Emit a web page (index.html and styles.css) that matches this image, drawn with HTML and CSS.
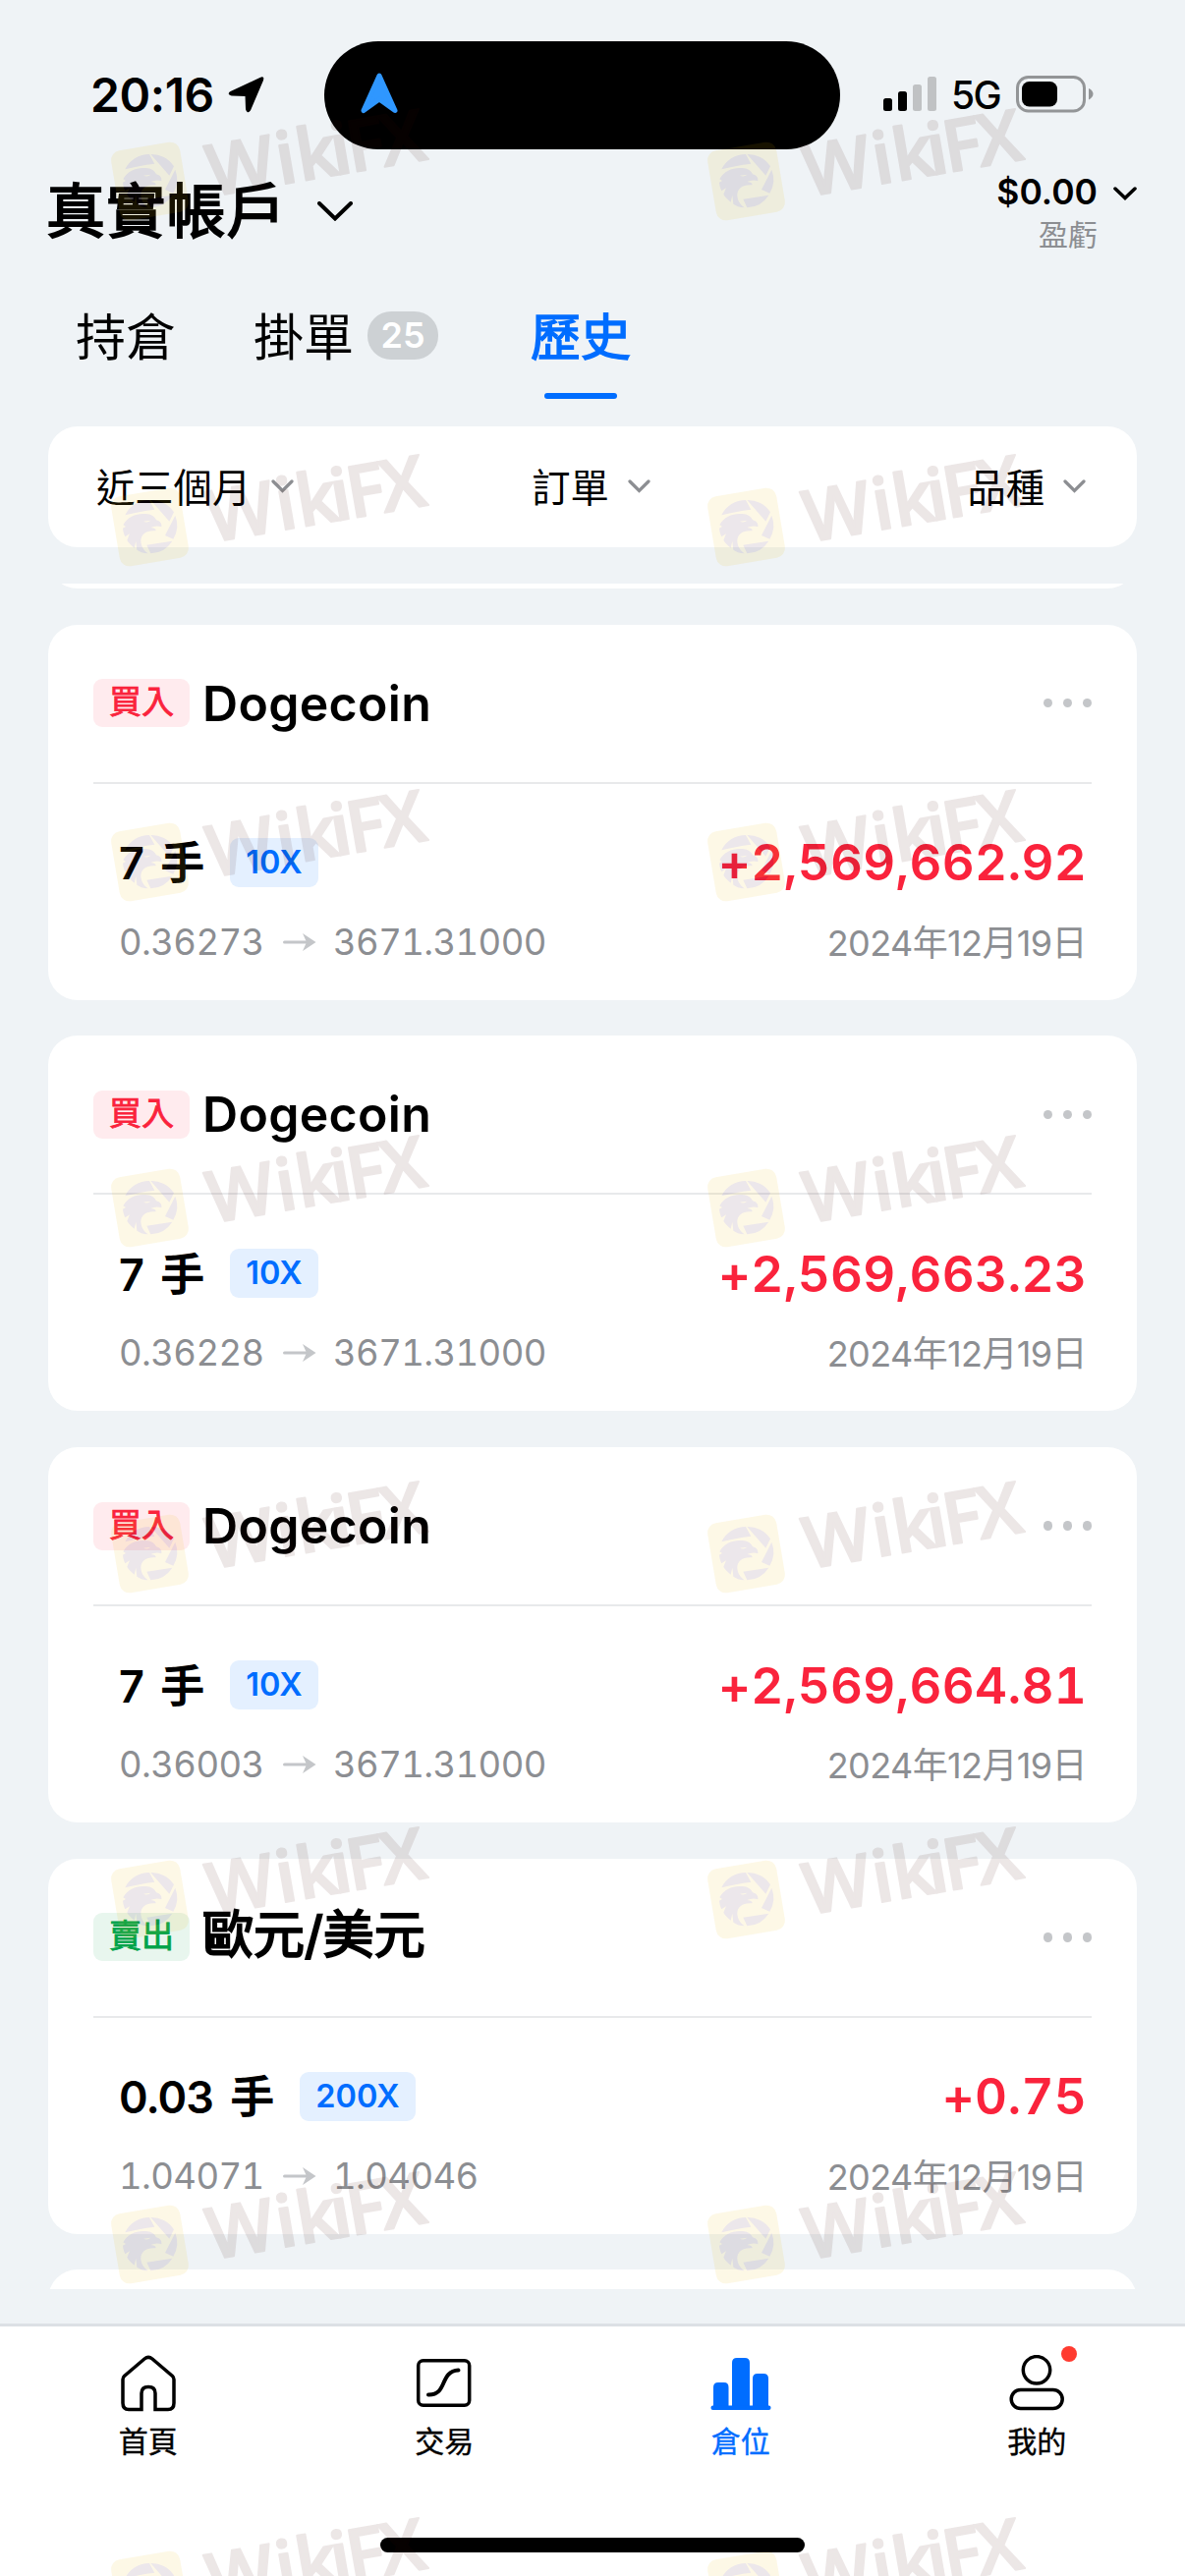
FILE: index.html
```html
<!doctype html>
<html lang="zh-Hant">
<head>
<meta charset="utf-8">
<title>歷史</title>
<link rel="stylesheet" href="styles.css">
</head>
<body>
<div class="phone">

<div class="status">
  <div class="status-left">
    <span class="time">20:16</span>
    <svg class="loc" width="38" height="38" viewBox="0 0 38 38"><path d="M3 17 L34 2.500 Q36 1.500 35 4.500 L22 35 Q20 38 19 34 L18.500 20 L4 19.500 Q0 18.500 3 17Z" fill="#000" stroke="#000" stroke-width="2" stroke-linejoin="round"/></svg>
  </div>
  <div class="island">
    <svg width="38" height="42" viewBox="0 0 38 42"><path d="M19 3 L35 38.500 L19 27 L3 38.500Z" fill="#2f97ff" stroke="#2f97ff" stroke-width="5" stroke-linejoin="round"/></svg>
  </div>
  <div class="status-right">
    <svg width="54" height="36" viewBox="0 0 54 36"><rect y="22" width="9" height="13" rx="2.500"/><rect x="15" y="15" width="9" height="20" rx="2.500"/><rect x="30" y="8" width="9" height="27" rx="2.500" fill="#c0c2c4"/><rect x="45" width="9" height="35" rx="2.500" fill="#c0c2c4"/></svg>
    <span class="net">5G</span>
    <svg width="80" height="38" viewBox="0 0 80 38"><rect x="1.500" y="1.500" width="68" height="34.500" rx="11" fill="none" stroke="#939597" stroke-width="3"/><rect x="6" y="6" width="36" height="25.500" rx="7.500"/><path d="M74 13 Q78.500 15 78.500 18.700 Q78.500 22 74 24.500Z" fill="#939597"/></svg>
  </div>
</div>

<div class="header">
  <h1>真實帳戶</h1>
  <svg class="chev-title" width="36" height="20" viewBox="0 0 36 20"><path d="M2 2 L18 17.500 L34 2" fill="none" stroke="#000" stroke-width="4" stroke-linecap="round"/></svg>
  <div class="pnl">
    <b>$0.00</b>
    <span>盈虧</span>
  </div>
  <svg class="chev-pnl" width="24" height="14" viewBox="0 0 24 14"><path d="M2 2 L12 11.500 L22 2" fill="none" stroke="#000" stroke-width="3.500" stroke-linecap="round"/></svg>
</div>

<div class="tabs">
  <div class="tab">持倉</div>
  <div class="tab">掛單<span class="count">25</span></div>
  <div class="tab active">歷史</div>
</div>

<div class="filters">
  <div class="filter">近三個月<svg width="23" height="14" viewBox="0 0 23 14"><path d="M2 2 L11.500 11.500 L21 2"/></svg></div>
  <div class="filter">訂單<svg width="23" height="14" viewBox="0 0 23 14"><path d="M2 2 L11.500 11.500 L21 2"/></svg></div>
  <div class="filter">品種<svg width="23" height="14" viewBox="0 0 23 14"><path d="M2 2 L11.500 11.500 L21 2"/></svg></div>
</div>

<div class="list">
  <div class="card prev"></div>

  <div class="card">
    <div class="card-head">
      <span class="tag buy">買入</span>
      <span class="symbol">Dogecoin</span>
      <span class="more"><i></i><i></i><i></i></span>
    </div>
    <div class="card-body">
      <div class="row">
        <span class="lots">7 手</span><span class="lever">10X</span>
        <span class="amount">+2,569,662.92</span>
      </div>
      <div class="row sub">
        <span class="open">0.36273</span>
        <svg width="34" height="20" viewBox="0 0 34 20"><path d="M1.500 10 H26"/><path class="tip" d="M20 1 L33.500 10 L20 19 L24 10Z"/></svg>
        <span class="close">3671.31000</span>
        <span class="date">2024年12月19日</span>
      </div>
    </div>
  </div>

  <div class="card">
    <div class="card-head">
      <span class="tag buy">買入</span>
      <span class="symbol">Dogecoin</span>
      <span class="more"><i></i><i></i><i></i></span>
    </div>
    <div class="card-body">
      <div class="row">
        <span class="lots">7 手</span><span class="lever">10X</span>
        <span class="amount">+2,569,663.23</span>
      </div>
      <div class="row sub">
        <span class="open">0.36228</span>
        <svg width="34" height="20" viewBox="0 0 34 20"><path d="M1.500 10 H26"/><path class="tip" d="M20 1 L33.500 10 L20 19 L24 10Z"/></svg>
        <span class="close">3671.31000</span>
        <span class="date">2024年12月19日</span>
      </div>
    </div>
  </div>

  <div class="card">
    <div class="card-head">
      <span class="tag buy">買入</span>
      <span class="symbol">Dogecoin</span>
      <span class="more"><i></i><i></i><i></i></span>
    </div>
    <div class="card-body">
      <div class="row">
        <span class="lots">7 手</span><span class="lever">10X</span>
        <span class="amount">+2,569,664.81</span>
      </div>
      <div class="row sub">
        <span class="open">0.36003</span>
        <svg width="34" height="20" viewBox="0 0 34 20"><path d="M1.500 10 H26"/><path class="tip" d="M20 1 L33.500 10 L20 19 L24 10Z"/></svg>
        <span class="close">3671.31000</span>
        <span class="date">2024年12月19日</span>
      </div>
    </div>
  </div>

  <div class="card">
    <div class="card-head">
      <span class="tag sell">賣出</span>
      <span class="symbol cjk">歐元/美元</span>
      <span class="more"><i></i><i></i><i></i></span>
    </div>
    <div class="card-body">
      <div class="row">
        <span class="lots">0.03 手</span><span class="lever">200X</span>
        <span class="amount">+0.75</span>
      </div>
      <div class="row sub">
        <span class="open">1.04071</span>
        <svg width="34" height="20" viewBox="0 0 34 20"><path d="M1.500 10 H26"/><path class="tip" d="M20 1 L33.500 10 L20 19 L24 10Z"/></svg>
        <span class="close">1.04046</span>
        <span class="date">2024年12月19日</span>
      </div>
    </div>
  </div>

  <div class="card"></div>
</div>

<div class="nav">
  <div class="nav-item">
    <svg width="64" height="60" viewBox="0 0 64 60"><path d="M25 55.500 H12 Q6 55.500 6 49 V25 Q6 23 7.500 21.500 L28 4 Q32 0.800 36 4 L56.500 21.500 Q58 23 58 25 V49 Q58 55.500 52 55.500 H39 V39 Q39 32.500 32 32.500 Q25 32.500 25 39Z" fill="none" stroke="#000" stroke-width="3.500"/></svg>
    <span>首頁</span>
  </div>
  <div class="nav-item">
    <svg width="64" height="60" viewBox="0 0 64 60"><rect x="5.700" y="5.700" width="52" height="45.500" rx="5" fill="none" stroke="#000" stroke-width="3.500"/><path d="M16 40.500 C36 41 27 16.500 46.500 15.500" fill="none" stroke="#000" stroke-width="4" stroke-linecap="round"/></svg>
    <span>交易</span>
  </div>
  <div class="nav-item on">
    <svg width="64" height="60" viewBox="0 0 64 60"><g fill="#006dff"><path d="M4 52 V33 Q4 28 9 28 H15 Q19.500 28 19.500 33 V52Z"/><path d="M23 52 V8 Q23 3 28 3 H36 Q41 3 41 8 V52Z"/><path d="M44 52 V24 Q44 19 49 19 H55 Q60 19 60 24 V52Z"/><rect x="1.500" y="51.500" width="61" height="4.500" rx="2"/></g></svg>
    <span>倉位</span>
  </div>
  <div class="nav-item">
    <svg width="64" height="60" viewBox="0 0 64 60"><g fill="none" stroke="#000" stroke-width="3.500"><circle cx="32" cy="15.300" r="13.700"/><rect x="6.200" y="35.500" width="52" height="19" rx="9.500"/></g></svg>
    <span>我的</span>
    <i class="dot"></i>
  </div>
</div>
<div class="home-bar"></div>

<svg class="mark" width="1206" height="2622" viewBox="0 0 1206 2622">
  <defs>
    <g id="wm">
      <rect x="5" y="4.500" width="71" height="72" rx="10" transform="rotate(-9.500 40.500 40.500)" fill="#ebb905"/>
      <g transform="scale(.3333) translate(-14 -18)" fill="#410a35">
        <path d="M60 103 A82 82 0 0 1 134 57 L150 86 Q100 92 60 103Z"/>
        <path d="M138 57 A82 82 0 0 1 209 94 L195 122Z"/>
        <path d="M213 104 A82 82 0 0 1 207 176 L182 165Z"/>
        <path d="M126 194 L204 182 A82 82 0 0 1 138 220Z"/>
        <path d="M54 133 C68 108 92 98 118 99 C138 97 151 107 155 118 C167 121 173 129 171 139 C161 135 149 136 138 141 C150 142 156 146 153 151 C128 148 108 160 108 182 C109 199 116 209 130 220 C114 219 104 215 96 209 L93 182 L88 203 C77 194 70 187 66 179 L74 160 L60 169 C56 161 54 152 53 143 L62 138Z"/>
        <path d="M116 122 L138 119 Q128 128 116 122Z" fill="#ebb905"/>
      </g>
      <text transform="translate(104 56) rotate(-9.800)" x="-1 70 91 126.500 143 178" fill="#410a05" stroke="#410a05">WikiFX</text>
    </g>
  </defs>
  <g opacity=".1">
    <use href="#wm" x="112" y="144"/><use href="#wm" x="719" y="144"/>
    <use href="#wm" x="112" y="496"/><use href="#wm" x="719" y="496"/>
    <use href="#wm" x="112" y="837"/><use href="#wm" x="719" y="837"/>
    <use href="#wm" x="112" y="1189"/><use href="#wm" x="719" y="1189"/>
    <use href="#wm" x="112" y="1541"/><use href="#wm" x="719" y="1541"/>
    <use href="#wm" x="112" y="1893"/><use href="#wm" x="719" y="1893"/>
    <use href="#wm" x="112" y="2244"/><use href="#wm" x="719" y="2244"/>
    <use href="#wm" x="112" y="2596"/><use href="#wm" x="719" y="2596"/>
  </g>
</svg>

</div>
</body>
</html>
```
FILE: styles.css
```css
* {
    box-sizing: border-box;
}
body {
    margin: 0;
    font-family: Inter, "Noto Sans CJK TC", sans-serif;
    color: #000;
}
svg {
    display: block;
    flex: none;
}
.phone {
    position: relative;
    width: 1206px;
    height: 2622px;
    overflow: hidden;
    background: #eff3f6;
    display: flex;
    flex-direction: column;
}

/* status bar */
.status {
    height: 152px;
    padding-top: 42px;
    display: grid;
    grid-template-columns: 330px 525px 1fr;
    flex: none;
}
.status-left,
.status-right {
    display: flex;
    align-items: center;
}
.status-left {
    padding-left: 92px;
    padding-bottom: 2px;
}
.time {
    font-size: 48px;
    font-weight: 600;
    letter-spacing: -.4px;
    width: 140px;
}
.island {
    background: #000;
    border-radius: 55px;
    display: flex;
    align-items: center;
    padding-left: 37px;
}
.island svg {
    margin-bottom: 5px;
}
.status-right {
    padding-left: 44px;
    padding-bottom: 2px;
}
.net {
    font-size: 39px;
    font-weight: 500;
    letter-spacing: -1.5px;
    width: 66px;
    margin-left: 15px;
}

/* account */
.header {
    height: 126px;
    padding: 0 49px;
    display: flex;
    align-items: center;
    flex: none;
}
h1 {
    margin: 0 31px 0 -2px;
    font-size: 60px;
    font-weight: 400;
    line-height: 1;
    letter-spacing: 1.2px;
    -webkit-text-stroke: 2px #000;
}
.pnl {
    margin-left: auto;
    padding-top: 3px;
    text-align: right;
    display: flex;
    flex-direction: column;
}
.pnl b {
    font-size: 35.5px;
    font-weight: 600;
    line-height: 44px;
}
.pnl span {
    font-size: 30px;
    line-height: 42px;
    color: #8c8e92;
}
.chev-pnl {
    margin: 0 0 36px 16px;
}

/* tabs */
.tabs {
    height: 128px;
    margin-bottom: 28px;
    padding-left: 77px;
    display: flex;
    flex: none;
}
.tab {
    position: relative;
    height: 128px;
    padding-bottom: 5px;
    display: flex;
    align-items: center;
    font-size: 51px;
}
.tab + .tab {
    margin-left: 79px;
}
.count {
    position: relative;
    top: 2px;
    width: 72px;
    height: 49px;
    margin-left: 14px;
    border-radius: 24px;
    background: #cdd1d4;
    color: #fff;
    font-size: 36px;
    font-weight: 600;
    line-height: 49px;
    text-align: center;
}
.tab.active {
    margin-left: 94px;
    color: #006dff;
    -webkit-text-stroke: 1.5px #006dff;
}
.tab.active::after {
    content: "";
    position: absolute;
    left: 14px;
    bottom: 0;
    width: 74px;
    height: 6px;
    border-radius: 3px;
    background: #006dff;
}

/* filters */
.filters {
    height: 123px;
    margin: 0 49px;
    padding: 0 52px 4px 49px;
    border-radius: 30px;
    background: #fff;
    display: grid;
    grid-template-columns: 1fr auto 1fr;
    align-items: center;
    flex: none;
}
.filter {
    display: flex;
    align-items: center;
    font-size: 39.3px;
}
.filter:last-child {
    justify-self: end;
}
.filter svg {
    margin-top: 3px;
    margin-left: 19px;
}
.filter:first-child svg {
    margin-left: 21px;
}
.filter path {
    fill: none;
    stroke: #8c8e92;
    stroke-width: 3.2;
    stroke-linecap: round;
}

/* orders */
.list {
    height: 1736px;
    margin: 37px 49px 35px;
    overflow: hidden;
    display: flex;
    flex-direction: column;
    gap: 36.7px;
    flex: none;
}
.card {
    height: 382px;
    padding: 0 46px;
    border-radius: 30px;
    background: #fff;
    flex: none;
}
.card.prev {
    margin-top: -377px;
}
.card-head {
    height: 162px;
    border-bottom: 2px solid #e8e9eb;
    display: flex;
    align-items: center;
}
.tag {
    width: 98px;
    height: 49px;
    margin-right: 13px;
    border-radius: 9px;
    font-size: 33px;
    line-height: 47px;
    text-align: center;
    -webkit-text-stroke: .8px;
}
.buy {
    background: #ffebee;
    color: #fa233c;
}
.sell {
    background: #e8f6ee;
    color: #00a34a;
}
.symbol {
    font-size: 50px;
    font-weight: 600;
    letter-spacing: .3px;
}
.symbol.cjk {
    padding-bottom: 4px;
    font-size: 52px;
    font-weight: 400;
    line-height: 60px;
    letter-spacing: 0;
    -webkit-text-stroke: 2px #000;
}
.more {
    margin-left: auto;
    display: flex;
    gap: 10.5px;
}
.more i {
    width: 9.5px;
    height: 9.5px;
    border-radius: 50%;
    background: #c4c6c9;
}
.card-body {
    padding: 55px 5px 0 26px;
}
.row {
    height: 50px;
    display: flex;
    align-items: center;
}
.lots {
    padding-bottom: 4px;
    font-size: 45px;
    font-weight: 600;
    letter-spacing: -1px;
    word-spacing: 7px;
}
.lever {
    height: 50px;
    padding: 0 16px;
    margin-left: 27px;
    border-radius: 9px;
    background: #e4f0ff;
    color: #006dff;
    font-size: 32.5px;
    font-weight: 600;
    line-height: 50px;
}
.amount {
    margin-left: auto;
    color: #fa233c;
    font-size: 51px;
    font-weight: 600;
    font-variant-numeric: tabular-nums;
    letter-spacing: .3px;
}
.sub {
    margin-top: 31px;
    color: #8c8e92;
    font-size: 36.5px;
}
.open {
    width: 167px;
}
.close {
    margin-left: 17px;
}
.open,
.close {
    font-variant-numeric: tabular-nums;
    letter-spacing: -.6px;
}
.sub path {
    fill: none;
    stroke: #c4c6c9;
    stroke-width: 3;
    stroke-linecap: round;
}
.sub .tip {
    fill: #c4c6c9;
    stroke: none;
}
.date {
    margin-left: auto;
    padding-bottom: 4px;
    font-size: 36px;
    letter-spacing: -.6px;
}

/* bottom navigation */
.nav {
    flex: 1;
    border-top: 3px solid #dce0e5;
    background: #fff;
    display: grid;
    grid-template-columns: repeat(4, 1fr);
}
.nav-item {
    position: relative;
    padding-top: 29px;
    display: flex;
    flex-direction: column;
    align-items: center;
    font-size: 30px;
    line-height: 40px;
    -webkit-text-stroke: .4px;
}
.nav-item span {
    margin-top: 8px;
}
.on {
    color: #006dff;
}
.dot {
    position: absolute;
    top: 20px;
    left: 175px;
    width: 16px;
    height: 16px;
    border-radius: 50%;
    background: #ff3b30;
}
.home-bar {
    position: absolute;
    left: 387px;
    top: 2583px;
    width: 432px;
    height: 15px;
    border-radius: 8px;
    background: #000;
}

/* watermark over everything */
.mark {
    position: absolute;
    left: 0;
    top: 0;
    pointer-events: none;
}
.mark text {
    font: 600 73px "Open Sans", sans-serif;
    stroke-width: 2px;
    stroke-linejoin: round;
}
```
